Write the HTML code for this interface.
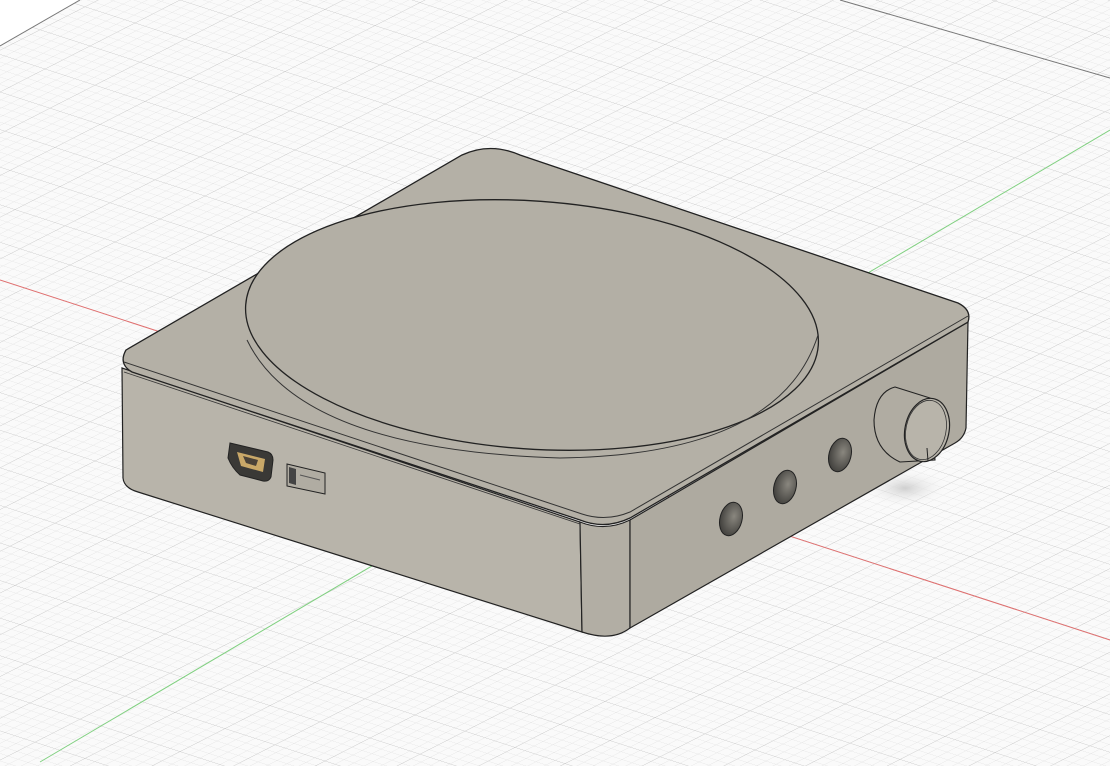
<!DOCTYPE html>
<html><head><style>
html,body{margin:0;padding:0;background:#fafafa;}
svg{display:block}
</style></head><body>
<svg width="1110" height="766" viewBox="0 0 1110 766" xmlns="http://www.w3.org/2000/svg">
<defs>
<pattern id="minor" width="10" height="10" patternUnits="userSpaceOnUse" patternTransform="matrix(1 0.324 -0.9 0.46 575 466)">
<path d="M0 0H10M0 0V10" stroke="#e3e3e3" stroke-width="1" fill="none"/>
</pattern>
<pattern id="major" width="50" height="50" patternUnits="userSpaceOnUse" patternTransform="matrix(1 0.324 -0.9 0.46 575 466)">
<path d="M0 0H50M0 0V50" stroke="#c8c8c8" stroke-width="1" fill="none"/>
</pattern>
<radialGradient id="hole" cx="0.6" cy="0.4" r="0.7">
<stop offset="0" stop-color="#8a877f"/><stop offset="1" stop-color="#3a3936"/>
</radialGradient>
<radialGradient id="shadow" cx="0.5" cy="0.5" r="0.5">
<stop offset="0" stop-color="#cfcfcf"/><stop offset="1" stop-color="#fafafa" stop-opacity="0"/>
</radialGradient>
</defs>
<rect width="1110" height="766" fill="#fafafa"/>
<rect width="1110" height="766" fill="url(#minor)"/>
<rect width="1110" height="766" fill="url(#major)"/>
<path d="M0 0 L80 0 L0 46 Z" fill="#fff"/>
<line x1="0" y1="46" x2="80" y2="0" stroke="#777" stroke-width="1"/>
<!-- axes -->
<line x1="0" y1="280" x2="1110" y2="640" stroke="#e07070" stroke-width="1"/>
<line x1="40" y1="762" x2="1110" y2="130" stroke="#80d080" stroke-width="1"/>
<line x1="840" y1="0" x2="1110" y2="78" stroke="#777" stroke-width="1"/>
<ellipse cx="905" cy="488" rx="45" ry="20" fill="url(#shadow)"/>
<!-- left face -->
<path d="M122 368 L580 522 L582 632 L138 492 Q124 488 123 478 Z" fill="#b8b4aa" stroke="#222" stroke-width="1.2"/>
<!-- front corner -->
<path d="M580 522 Q605 532 630 520 L630 628 Q612 642 582 632 Z" fill="#b2aea4" stroke="#222" stroke-width="1.2"/>
<!-- right face -->
<path d="M630 520 L968 322 L966 428 Q964 438 955 443 L630 628 Z" fill="#aeaaa0" stroke="#222" stroke-width="1.2"/>
<!-- top face -->
<path d="M126 350 L462 155 Q490 142 520 155 L958 303 Q972 310 968 322 L630 518 Q605 530 580 520 L132 372 Q118 364 126 350 Z" fill="#b4b0a6" stroke="#222" stroke-width="1.3"/>
<path d="M124 362 L582 514 Q606 522 630 512 L968 316" fill="none" stroke="#333" stroke-width="1"/>
<path d="M124 372 L580 524" fill="none" stroke="#333" stroke-width="0.8"/>
<!-- circle -->
<ellipse cx="532" cy="325" rx="287" ry="124" transform="rotate(4 532 325)" fill="#b3afa5" stroke="#222" stroke-width="1.3"/>
<path d="M247 340 Q300 450 560 458 Q780 455 818 335" fill="none" stroke="#333" stroke-width="1"/>
<!-- HDMI -->
<path d="M230 443 L268 452 Q273 454 273 460 L271 477 Q269 482 263 481 L240 475 Q232 468 228 458 Z" fill="#3a3936" stroke="#222"/>
<path d="M237 452 L265 459 L263 472 L241 466 Z" fill="#c9a868"/>
<path d="M243 456 L258 460 L256 466 L246 463 Z" fill="#4a4238"/>
<!-- USB -->
<path d="M287 464 L325 473 L325 494 L287 486 Z" fill="#b0aca2" stroke="#222"/>
<path d="M289 467 L296 469 L296 485 L289 483 Z" fill="#444"/>
<path d="M300 475 L320 480" stroke="#555" stroke-width="1"/>
<!-- holes -->
<ellipse cx="731" cy="519" rx="11" ry="17" transform="rotate(15 731 519)" fill="url(#hole)" stroke="#222"/>
<ellipse cx="785" cy="487" rx="11" ry="17" transform="rotate(15 785 487)" fill="url(#hole)" stroke="#222"/>
<ellipse cx="840" cy="455" rx="11" ry="17" transform="rotate(15 840 455)" fill="url(#hole)" stroke="#222"/>
<!-- knob -->
<path d="M895 387 L930 398 L935 460 L900 462 Q874 450 874 420 Q876 392 895 387 Z" fill="#b0aca2" stroke="#222" stroke-width="1.1"/>
<ellipse cx="927" cy="430" rx="22" ry="32" transform="rotate(12 927 430)" fill="#b8b4aa" stroke="#222" stroke-width="1.2"/>
<ellipse cx="926" cy="430" rx="20" ry="30" transform="rotate(12 926 430)" fill="none" stroke="#333" stroke-width="0.8"/>
<line x1="927" y1="448" x2="928" y2="461" stroke="#222" stroke-width="1"/>
</svg>
</body></html>
